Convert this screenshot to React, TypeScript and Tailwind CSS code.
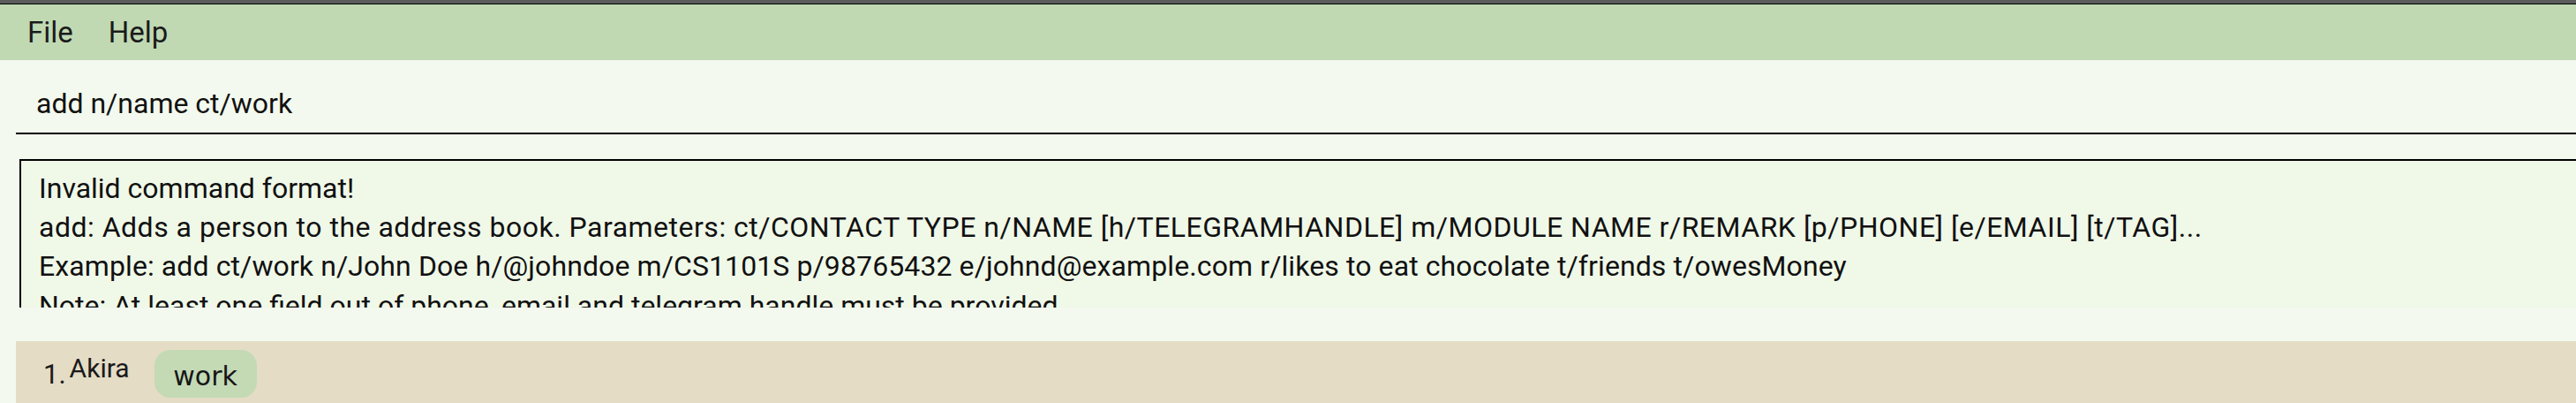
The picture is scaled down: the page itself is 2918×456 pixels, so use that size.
const resultLines = [
  { text: 'Invalid command format!', tracking: '' },
  {
    text: 'add: Adds a person to the address book. Parameters: ct/CONTACT TYPE n/NAME [h/TELEGRAMHANDLE] m/MODULE NAME r/REMARK [p/PHONE] [e/EMAIL] [t/TAG]...',
    tracking: 'tracking-[0.5px]',
  },
  {
    text: 'Example: add ct/work n/John Doe h/@johndoe m/CS1101S p/98765432 e/johnd@example.com r/likes to eat chocolate t/friends t/owesMoney',
    tracking: 'tracking-[0.1px]',
  },
  { text: 'Note: At least one field out of phone, email and telegram handle must be provided.', tracking: '' },
]

function MenuBar() {
  return (
    <div className="flex h-[63px] items-center gap-[40px] bg-[#c0d9b3] pl-[31px] text-[33px] text-[#1b1b1b]">
      <span>File</span>
      <span>Help</span>
    </div>
  )
}

function CommandBox() {
  return (
    <div className="h-[112px] shrink-0 pl-[18px] pt-[31px]">
      <div className="border-b-2 border-black pb-[14px] pl-[23px]">
        <p className="h-[37px] text-[32px] leading-[37px] text-[#111]">add n/name ct/work</p>
      </div>
    </div>
  )
}

function ResultDisplay() {
  return (
    <div className="ml-[22px] h-[168px] shrink-0 overflow-hidden border-l-2 border-t-2 border-black bg-[#f0f8e8] pl-[20px] pt-[9px]">
      {resultLines.map((line) => (
        <p key={line.text} className={`whitespace-pre text-[32px] leading-[44.2px] text-[#111] ${line.tracking}`}>
          {line.text}
        </p>
      ))}
    </div>
  )
}

function PersonList() {
  return (
    <div className="ml-[18px] mt-[38px] h-[70px] shrink-0 bg-[#e4dcc5] pl-[31px] pt-[10px]">
      <div className="flex items-start">
        <span className="mt-[12px] text-[31px] leading-[31px] text-[#1a1a1a]">1.</span>
        <span className="ml-[4px] mt-[6px] text-[30px] leading-[30px] text-[#1a1a1a]">Akira</span>
        <span className="ml-[28px] flex h-[54px] w-[116px] items-center justify-center rounded-[18px] bg-[#c3dab5] pt-[4px] font-['DejaVu_Sans',sans-serif] text-[30px] text-[#161616]">
          work
        </span>
      </div>
    </div>
  )
}

export default function App() {
  return (
    <div className="flex h-[456px] w-[2918px] flex-col overflow-hidden bg-[#f3f9ee] font-['Roboto',sans-serif]">
      <div className="h-[5px] shrink-0 border-b border-black bg-[#5c5c5c]" />
      <MenuBar />
      <CommandBox />
      <ResultDisplay />
      <PersonList />
    </div>
  )
}
